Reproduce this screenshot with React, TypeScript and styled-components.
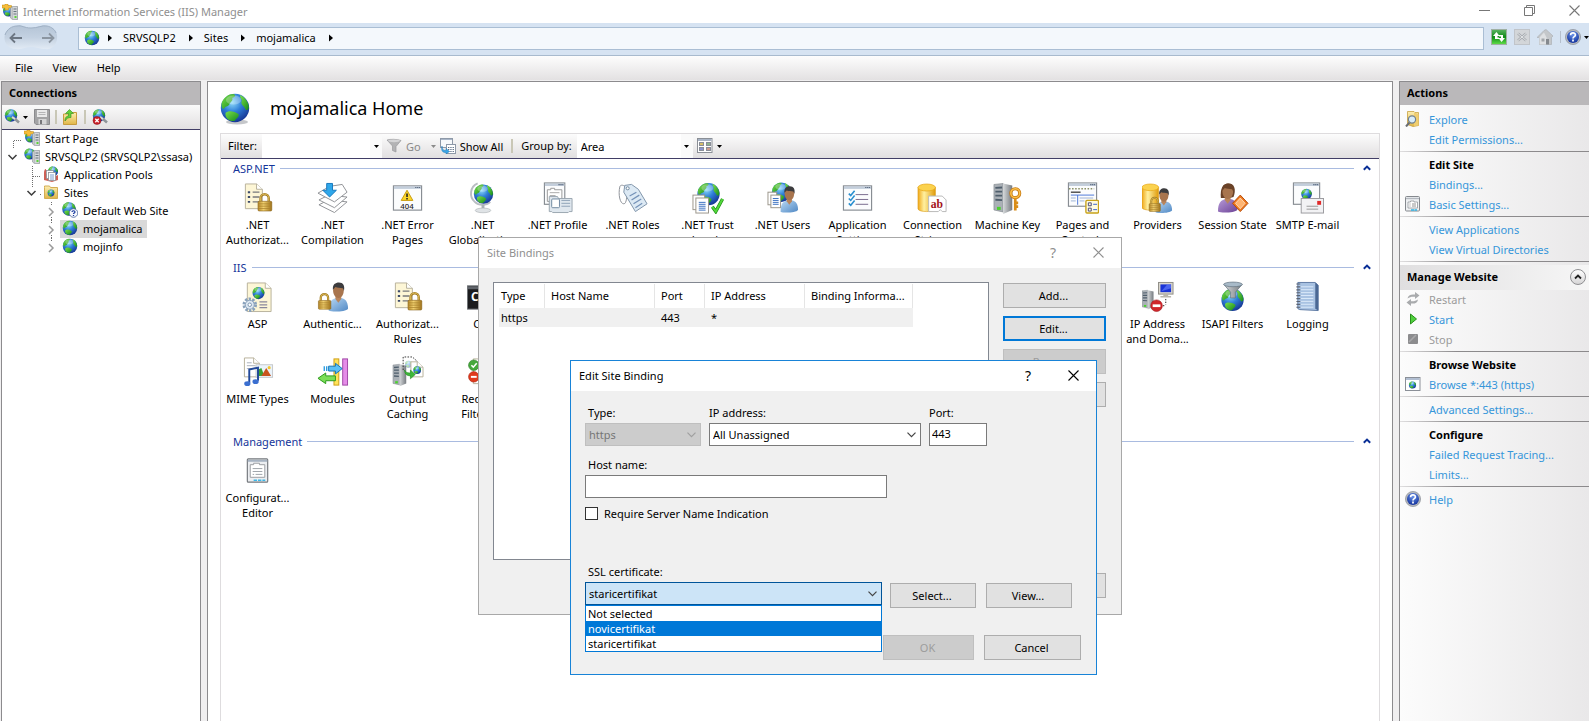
import React from "react";
import styled, { createGlobalStyle, css } from "styled-components";

const GlobalStyle = createGlobalStyle`
  * { box-sizing: border-box; }
  html, body { margin: 0; padding: 0; }
  body {
    font-family: "Noto Sans", "Open Sans", sans-serif;
    font-size: 11px;
    line-height: 15px;
    color: #000;
    background: #f0eff0;
    overflow: hidden;
  }
  button, input, select { font: inherit; color: inherit; margin: 0; }
  ul { list-style: none; margin: 0; padding: 0; }
  h1, h2, h3 { margin: 0; font-size: 11px; }
  svg { display: block; flex: none; }
`;

/* ---------- icon parts ---------- */

const DefsSvg = styled.svg`
  position: absolute;
  width: 0;
  height: 0;
`;

const SharedDefs = () => (
  <DefsSvg aria-hidden="true">
    <defs>
      <radialGradient id="sea" cx="0.4" cy="0.3" r="0.75">
        <stop offset="0" stopColor="#8fdcf9" />
        <stop offset="0.45" stopColor="#2f7fd8" />
        <stop offset="1" stopColor="#14308e" />
      </radialGradient>
      <linearGradient id="land" x1="0" y1="0" x2="1" y2="1">
        <stop offset="0" stopColor="#7be04a" />
        <stop offset="1" stopColor="#158a1c" />
      </linearGradient>
      <linearGradient id="brass" x1="0" x2="1">
        <stop offset="0" stopColor="#b88a2a" />
        <stop offset="0.4" stopColor="#f0d070" />
        <stop offset="1" stopColor="#a0721a" />
      </linearGradient>
      <linearGradient id="yellowCan" x1="0" x2="1">
        <stop offset="0" stopColor="#f0a818" />
        <stop offset="0.35" stopColor="#fff0a0" />
        <stop offset="1" stopColor="#e09a08" />
      </linearGradient>
      <linearGradient id="steel" x1="0" x2="1">
        <stop offset="0" stopColor="#d5d8da" />
        <stop offset="1" stopColor="#767b80" />
      </linearGradient>
      <linearGradient id="shirt" x1="0" y1="0" x2="1" y2="1">
        <stop offset="0" stopColor="#b9d9f4" />
        <stop offset="1" stopColor="#5088c4" />
      </linearGradient>
      <linearGradient id="violet" x1="0" y1="0" x2="1" y2="1">
        <stop offset="0" stopColor="#b79bd8" />
        <stop offset="1" stopColor="#6c4296" />
      </linearGradient>
      <linearGradient id="folder" x1="0" y1="0" x2="0" y2="1">
        <stop offset="0" stopColor="#fdeeb0" />
        <stop offset="1" stopColor="#e0b648" />
      </linearGradient>
      <linearGradient id="greenBox" x1="0" y1="0" x2="0" y2="1">
        <stop offset="0" stopColor="#5db465" />
        <stop offset="0.5" stopColor="#0e8a16" />
        <stop offset="1" stopColor="#62e04a" />
      </linearGradient>
      <radialGradient id="helpBlue" cx="0.5" cy="0.3" r="0.7">
        <stop offset="0" stopColor="#6d95ea" />
        <stop offset="1" stopColor="#10309c" />
      </radialGradient>
      <linearGradient id="pill" x1="0" y1="0" x2="0" y2="1">
        <stop offset="0" stopColor="#b4c4d6" />
        <stop offset="0.5" stopColor="#c3d1e1" />
        <stop offset="1" stopColor="#e2ebf5" />
      </linearGradient>
    </defs>
  </DefsSvg>
);

type At = { x: number; y: number; s?: number };
const at = ({ x, y, s = 1 }: At) => `translate(${x} ${y}) scale(${s})`;

const Globe = (p: At) => (
  <g transform={at(p)}>
    <circle r="10" fill="url(#sea)" />
    <path d="M-9.4-3.4C-8-7.6-4-10-1-9.8C1-9 0-7.6-2-7C-1-5-3.4-4.4-4-2.4C-5-.6-7-1.4-7.6 .6C-9 .8-9.8-1-9.4-3.4Z" fill="url(#land)" />
    <path d="M3.6-9.2C7-7.8 9.6-4 9.8-.6C9.4 1.8 7.6 2.2 6.8-.2C6-1.6 4-2.6 4.6-4.6C5.4-6 3.4-6.6 3.6-9.2Z" fill="url(#land)" />
    <path d="M-6.6 3.4C-5 1.6-.6 1.8 2.6 4.4C3 6.4 .8 7.4-.4 9.2C-4 9.6-7.4 7-6.6 3.4Z" fill="url(#land)" />
    <ellipse cx="-1" cy="-5.6" rx="5.4" ry="3.2" fill="#fff" opacity="0.28" />
  </g>
);

const Padlock = (p: At) => (
  <g transform={at(p)}>
    <path d="M3 8V5A4 4 0 0 1 11 5V8" fill="none" stroke="#a37c22" strokeWidth="2.4" />
    <path d="M3 8V5A4 4 0 0 1 11 5V8" fill="none" stroke="#e6c764" strokeWidth="0.8" />
    <rect x="0.5" y="8" width="13.5" height="9.5" rx="1" fill="url(#brass)" stroke="#8a651a" strokeWidth="0.6" />
    <path d="M1 10.5H14M1 12.8H14M1 15.1H14" stroke="#a8802c" strokeWidth="0.7" />
  </g>
);

const Sheet = ({ fill = "#fdf6d6", w = 18, h = 26, ...p }: At & { fill?: string; w?: number; h?: number }) => (
  <g transform={at(p)}>
    <path d={`M.5 .5H${w - 6}L${w} 6V${h}H.5Z`} fill={fill} stroke="#b8b29c" />
    <path d={`M${w - 6} .5V6H${w}`} fill="#fff" stroke="#b8b29c" />
  </g>
);

const Bullets = (p: At) => (
  <g transform={at(p)}>
    <path d="M0 1H2.4M0 6H2.4M0 11H2.4" stroke="#3b4a6b" strokeWidth="2" />
    <path d="M5 1H12M5 6H12M5 11H12" stroke="#77787c" strokeWidth="1.4" />
  </g>
);

const Person = ({ hair = "#3c3c3e", shirt = "url(#shirt)", long = false, ...p }: At & { hair?: string; shirt?: string; long?: boolean }) => (
  <g transform={at(p)}>
    <path d="M0 29C0 20 3 17 8 16H13C18 17 20 21 20 27C18 30 4 31 0 29Z" fill={shirt} />
    <path d="M7 14H13V17L10 21L7 17Z" fill="#b9855c" />
    {long && <path d="M3 15C2 5 5 0 11 0C17 0 19 6 16 14L12 15H6Z" fill={hair} />}
    <path d="M4.6 8C4.6 2.6 7 2 10 2S15.6 3 15.6 8S13 16 10.2 16S4.6 13 4.6 8Z" fill="#a8754e" />
    <path d="M4.4 7.4C4 2 7 0 10.6 0C15 0 17 3.6 15.8 8.6L14.6 6C12 5.4 9 6 7 4.8Z" fill={hair} />
  </g>
);

const Tower = (p: At) => (
  <g transform={at(p)}>
    <path d="M0 1L9 0V28L0 26Z" fill="#aab0b6" stroke="#7f858b" strokeWidth="0.6" />
    <path d="M9 0L18 2V26L9 30Z" fill="url(#steel)" />
    <path d="M1.4 4.4L8 4M1.4 8L8 8M1.4 12L8 12M1.4 16L8 16.4" stroke="#4f5e6c" strokeWidth="1.8" />
    <rect x="3" y="23" width="3.6" height="3" fill="#4bd22c" />
  </g>
);

const WindowBox = ({ w, h, ...p }: At & { w: number; h: number }) => (
  <g transform={at(p)}>
    <rect x="0.5" y="0.5" width={w} height={h} fill="#fbfcfd" stroke="#888d93" strokeWidth="1.2" />
    <rect x="1" y="1" width={w - 1} height="2.6" fill="#c3cedb" />
    <path d={`M${w - 6} 2.2H${w - 1}`} stroke="#4c5c74" strokeWidth="1.2" strokeDasharray="1.2 .8" />
  </g>
);

const Can = (p: At) => (
  <g transform={at(p)}>
    <path d="M0 4V26C0 30 18 30 18 26V4Z" fill="url(#yellowCan)" stroke="#d89a1c" strokeWidth="0.6" />
    <ellipse cx="9" cy="4.2" rx="9" ry="3.6" fill="#fbd24e" stroke="#e8a91c" strokeWidth="0.8" />
  </g>
);

const NoEntry = (p: At) => (
  <g transform={at(p)}>
    <circle r="6" fill="#d0262b" stroke="#9d1418" strokeWidth="0.6" />
    <rect x="-4" y="-1.4" width="8" height="2.8" fill="#fff" />
  </g>
);

const art: Record<string, React.ReactNode> = {
  authorization: (
    <>
      <Sheet x={3} y={1} />
      <Bullets x={6} y={9} />
      <Padlock x={16} y={11} s={1.05} />
    </>
  ),
  compilation: (
    <>
      <path d="M2 23L12 18L31 20L18 31Z" fill="#fff" stroke="#8f9296" />
      <path d="M2 18L12 13L31 15L18 26Z" fill="#fff" stroke="#8f9296" />
      <path d="M1 11L13 4L26 2L31 10L18 20Z" fill="#fff" stroke="#8f9296" />
      <path d="M10 1H16V8H20L13 15L6 8H10Z" fill="#2ea7ea" stroke="#1678bd" />
    </>
  ),
  errors: (
    <>
      <WindowBox x={1} y={3} w={29} h={25} />
      <path d="M15.5 8L21.5 18.5H9.5Z" fill="#fbd62a" stroke="#c89a0a" strokeLinejoin="round" />
      <path d="M15.5 11.4V15M15.5 16V17.6" stroke="#222" strokeWidth="1.6" />
      <text x="15.5" y="27" fontSize="8" fontWeight="500" textAnchor="middle" fill="#222">404</text>
    </>
  ),
  globalization: (
    <>
      <path d="M11 1C3 4 2 15 8 20C12 24 20 24 24 20" fill="none" stroke="#b9bdc2" strokeWidth="2" />
      <Globe x={17} y={12} />
      <path d="M15 23H18V28H15Z" fill="#aab0b6" />
      <ellipse cx="16.5" cy="28.8" rx="8" ry="2.4" fill="#dfe3e6" stroke="#a7abb0" strokeWidth="0.6" />
    </>
  ),
  profile: (
    <>
      <WindowBox x={2} y={0} w={21} h={22} />
      <path d="M5.5 7.5H9V6H13V7.5H20.5V19.5H5.5Z" fill="#fff" stroke="#999" />
      <path d="M8 10.5H18M8 13.5H14" stroke="#aaa" />
      <path d="M7.5 14.5H16L17 16.5H31V30H28L27 31H11L10 30H7.5Z" fill="#dfe7ee" stroke="#9aa5af" />
      <rect x="10" y="17" width="8" height="9" rx="1" fill="#fff" stroke="#6f88a0" />
      <path d="M20 18.5H29M20 21.5H29M20 24.5H29" stroke="#8fa3b8" />
    </>
  ),
  roles: (
    <>
      <path d="M3 4C1 12 3 22 7 22C10 22 10 14 11 8C8 2 4 2 3 4Z" fill="#fff" stroke="#8d9299" />
      <path d="M8 3L15 2L22 7L31 22L19 30L7 10Z" fill="#dce9f4" stroke="#7e93a8" />
      <circle cx="11" cy="6" r="1.6" fill="#fff" stroke="#70869c" />
      <path d="M13 14L20 10M15 18L23 13M17 22L25 17M19 26L26 21.5" stroke="#7592b8" strokeWidth="1.3" />
    </>
  ),
  trust: (
    <>
      <Globe x={17} y={12} s={1.15} />
      <rect x="1" y="13" width="12" height="15" fill="#fff" stroke="#9a958a" />
      <rect x="4" y="16" width="13" height="15.5" fill="#fff" stroke="#9a958a" />
      <path d="M7 20.5H14M7 22.5H14M7 24.5H14M7 26.5H14M7 28.5H14" stroke="#3a70c0" />
      <path d="M21 25L24.5 30L31.5 17" fill="none" stroke="#1e8a14" strokeWidth="3.4" />
      <path d="M21 25L24.5 30L31.5 17" fill="none" stroke="#52d83a" strokeWidth="2" />
    </>
  ),
  users: (
    <>
      <Globe x={15} y={10} s={1} />
      <rect x="1" y="10" width="9" height="13" fill="#fff" stroke="#9a958a" />
      <rect x="4" y="13" width="10" height="13" fill="#fff" stroke="#9a958a" />
      <path d="M6 16.5H12M6 18.5H12M6 20.5H12M6 22.5H12" stroke="#3a70c0" />
      <Person x={14} y={4} s={0.9} />
    </>
  ),
  appSettings: (
    <>
      <WindowBox x={1} y={3} w={29} h={25} />
      <path d="M14 12.5H27M14 17.5H27M14 22.5H27" stroke="#77698c" />
      <path d="M7 11.5L9 13.5L13 8.5M7 16.5L9 18.5L13 13.5M7 21.5L9 23.5L13 18.5" fill="none" stroke="#2a8fd0" strokeWidth="1.6" />
    </>
  ),
  connection: (
    <>
      <Can x={1} y={1} />
      <path d="M12 14H26L30 18V30H26L24 28L22 30H12Z" fill="#fff" stroke="#b9b9b9" />
      <text x="20.5" y="26" fontSize="12" fontWeight="700" fontFamily="Liberation Serif, serif" textAnchor="middle" fill="#a3131a">ab</text>
    </>
  ),
  machineKey: (
    <>
      <Tower x={2} y={1} s={1.05} />
      <circle cx="24" cy="11" r="4.6" fill="none" stroke="#c87a12" strokeWidth="3.2" />
      <circle cx="24" cy="11" r="4.6" fill="none" stroke="#fbc14a" strokeWidth="1.6" />
      <path d="M24 16V29M24 21H27M24 25H27" stroke="#d98d18" strokeWidth="2.8" />
    </>
  ),
  pages: (
    <>
      <WindowBox x={1} y={0} w={29} h={24} />
      <path d="M2 6.5H28" stroke="#8a9066" strokeWidth="1.6" strokeDasharray="1.6 1.6" />
      <path d="M4 10H14" stroke="#333" strokeWidth="1.3" />
      <path d="M4 13H28M11 13V23" stroke="#4a76d8" />
      <path d="M4 16H9M4 19H9M13 16H27M13 19H18" stroke="#9db2d4" />
      <rect x="19.5" y="18.5" width="13" height="13" rx="1" fill="#fffbe0" stroke="#c8a21a" strokeWidth="1.4" />
      <path d="M22 21H25V24H22ZM22 26.5H25V29.5H22Z" fill="none" stroke="#4a4a78" />
      <path d="M27 22.5H31M27 28H31" stroke="#3a62d0" />
    </>
  ),
  providers: (
    <>
      <Can x={0} y={1} s={0.95} />
      <Person x={14} y={6} s={0.85} />
      <Padlock x={7} y={15} s={0.85} />
    </>
  ),
  session: (
    <>
      <Person x={1} y={1} hair="#6a4228" shirt="url(#violet)" long />
      <path d="M24 13L32 21.5L24 30L16 21.5Z" fill="#ef7a1e" stroke="#b44a0a" />
      <path d="M24 16L29 21.5L24 27L19 21.5Z" fill="#ffb470" stroke="#fff" strokeWidth="0.6" />
    </>
  ),
  smtp: (
    <>
      <WindowBox x={1} y={0} w={27} h={22} />
      <Globe x={15} y={12} s={0.55} />
      <rect x="9.5" y="16.5" width="23" height="15" fill="#f2f2f4" stroke="#9b9b9f" />
      <rect x="26" y="19" width="4" height="4" fill="#e02a2a" />
      <path d="M15 24.5H27M15 27.5H27" stroke="#999" />
    </>
  ),
  asp: (
    <>
      <Sheet x={5} y={1} w={25} h={30} />
      <Globe x={17} y={12} s={0.62} />
      <path d="M18 21H26M18 24H26M18 27H26" stroke="#8a879c" strokeWidth="1.3" />
      <circle cx="8" cy="24" r="6" fill="none" stroke="#8aa2bc" strokeWidth="3" strokeDasharray="2.4 1.37" />
      <circle cx="8" cy="24" r="4.6" fill="#dce7f1" stroke="#8aa2bc" />
      <circle cx="8" cy="24" r="1.8" fill="#fff" stroke="#7c95b0" />
    </>
  ),
  authentication: (
    <>
      <Person x={12} y={1} s={1} />
      <Padlock x={1} y={12} s={0.95} />
    </>
  ),
  cgi: (
    <>
      <rect x="0.5" y="4.5" width="31" height="24" fill="#1c1c1e" stroke="#707478" />
      <rect x="1" y="5" width="30" height="3" fill="#60646a" />
      <text x="4" y="20" fontSize="12" fontWeight="700" fill="#fff">C:\</text>
    </>
  ),
  ip: (
    <>
      <Tower x={0} y={9} s={0.66} />
      <rect x="17" y="1" width="15" height="12" fill="#d9d6cc" stroke="#8f8d86" />
      <rect x="19" y="3" width="11" height="8" fill="#1a33d6" />
      <path d="M20 10L26 3H30V7Z" fill="#6a86ff" opacity="0.6" />
      <path d="M22 13H27V15H30V16.500H19V15H22Z" fill="#b9b6ac" />
      <path d="M24.500 18V24M23 25H17" stroke="#222" strokeDasharray="1.4 1.4" />
      <NoEntry x={15} y={25} />
    </>
  ),
  isapi: (
    <>
      <Globe x={16} y={19} s={1.15} />
      <path d="M7 3L14 11V17H19V11L26 3Z" fill="url(#steel)" stroke="#60707e" strokeWidth="0.7" />
      <ellipse cx="16.5" cy="3" rx="9.6" ry="2.4" fill="#a8bac8" stroke="#60707e" strokeWidth="0.7" />
    </>
  ),
  logging: (
    <>
      <path d="M6 1H24L27 4V30L8 29L6 28Z" fill="#a8c2e2" stroke="#5f7ba4" />
      <path d="M24 1L27 4V30L24 28Z" fill="#4b6894" />
      <path d="M9 5.5H22M9 8.5H22M9 11.5H22M9 14.5H22M9 17.5H22M9 20.5H22M9 23.5H22M9 26.5H22" stroke="#dceafa" />
      <path d="M6.5 2V29" stroke="#5c6472" strokeWidth="4" strokeDasharray="1.2 1.8" />
    </>
  ),
  mime: (
    <>
      <Sheet x={2} y={1} w={16} h={20} fill="#fff" />
      <path d="M5 6.5H10M5 9.5H14M5 12.5H14" stroke="#a9b0ba" />
      <rect x="14.5" y="8.5" width="17" height="13" fill="#eaf3fb" stroke="#c5c8cb" />
      <path d="M16 20V14L20 12L23 20Z" fill="#3ba035" />
      <path d="M20 20L25 12L30 20Z" fill="#c8541e" />
      <circle cx="28" cy="11.5" r="1.6" fill="#f4c430" />
      <path d="M7.5 27V13.5L16.5 11.5V25" fill="none" stroke="#234a9a" strokeWidth="2" />
      <ellipse cx="5.5" cy="28" rx="3.2" ry="2.5" fill="#3b6fd0" />
      <ellipse cx="14" cy="26" rx="3.2" ry="2.5" fill="#3b6fd0" />
    </>
  ),
  modules: (
    <>
      <rect x="17.5" y="2.5" width="5" height="27" fill="#ffe35a" stroke="#cf9e16" />
      <rect x="26.5" y="2.5" width="5" height="27" fill="#e58ce8" stroke="#a048a6" />
      <path d="M7.5 10V15M10 10V15" stroke="#2a9be0" strokeWidth="1.4" />
      <path d="M12 10H19V7L26 12.5L19 18V15H12Z" fill="#5cc0f5" stroke="#1474b8" />
      <path d="M19 20H9V17L1 22.5L9 28V25H19Z" fill="#7ade56" stroke="#2c9a1c" />
    </>
  ),
  output: (
    <>
      <Tower x={1} y={8} s={0.76} />
      <path d="M11.5 14V.5H21L26 5V11" fill="none" stroke="#333" strokeDasharray="1.6 1.4" />
      <g opacity="0.4"><Globe x={17} y={8} s={0.35} /></g>
      <Sheet x={19} y={5} w={13} h={16} fill="#fff" />
      <Globe x={26} y={14} s={0.4} />
      <path d="M13 14C14 17 17 17 19 17V14L24 18.5L19 23V20C15 20 13 18 13 14Z" fill="#3fb83a" stroke="#1f8a1c" strokeWidth="0.6" />
    </>
  ),
  filtering: (
    <>
      <Sheet x={6} y={2} w={20} h={26} fill="#fff" />
      <circle cx="7" cy="9" r="5.4" fill="#46a83c" stroke="#2a7a24" strokeWidth="0.6" />
      <path d="M4.5 9L6.5 11L10 7" fill="none" stroke="#fff" strokeWidth="1.6" />
      <circle cx="7" cy="21" r="5.4" fill="#e03a1c" stroke="#a8200e" strokeWidth="0.6" />
      <path d="M4 21H10" stroke="#fff" strokeWidth="2" />
    </>
  ),
  config: (
    <>
      <rect x="5.5" y="3.5" width="21" height="24" rx="1" fill="#eceef1" stroke="#74787d" strokeWidth="1.2" />
      <path d="M6 5.5H26" stroke="#a7b3c2" strokeWidth="2" />
      <path d="M8.5 9.500H12V8H18V9.500H23.500V22.500H8.500Z" fill="#fff" stroke="#9a9da1" />
      <path d="M11 13.500H21M11 16.500H21M11 19.500H12.500M14 19.500H21" stroke="#9da2a8" />
      <path d="M12 25.500H24" stroke="#3bb7e8" strokeWidth="1.4" strokeDasharray="3.5 1" />
    </>
  ),
};

const FeatureArt = ({ name }: { name: string }) => (
  <svg width="32" height="32" viewBox="0 0 33 32" aria-hidden="true">{art[name]}</svg>
);

/* ---------- small icons ---------- */

const Icon16 = ({ children }: { children: React.ReactNode }) => (
  <svg width="16" height="16" viewBox="0 0 16 16" aria-hidden="true">{children}</svg>
);

const GlobeIcon = ({ size = 16 }: { size?: number }) => (
  <svg width={size} height={size} viewBox="-11 -11 22 22" aria-hidden="true"><Globe x={0} y={0} /></svg>
);

const MiniTower = () => (
  <g>
    <path d="M8.500 4L10.500 2.500H15.500V15.500H10.500L8.500 14Z" fill="url(#steel)" stroke="#8b9096" strokeWidth="0.600" />
    <path d="M11 2.800H15.200V15.200H11Z" fill="#d3d6d9" />
    <path d="M11.500 5H14.500M11.500 7.500H14.500M11.500 10H14.500" stroke="#6b7680" strokeWidth="1.100" />
    <rect x="12.500" y="12" width="2" height="2" fill="#5bd436" />
  </g>
);

const AppIcon = () => (
  <Icon16>
    <Globe x={6.5} y={7} s={0.55} />
    <path d="M0 1H3V0H6V1.500H9.500V4H6.500V6H3V4H0Z" fill="#f6bd3a" stroke="#c08818" strokeWidth="0.500" />
    <MiniTower />
  </Icon16>
);

const ServerIcon = () => (
  <Icon16>
    <Globe x={5.8} y={6} s={0.55} />
    <MiniTower />
  </Icon16>
);

const PoolsIcon = () => (
  <Icon16>
    <Globe x={10} y={5.5} s={0.5} />
    <path d="M1 8C1 4 2 3 3 3V8L13 10L15 9V14L9 16L1 14Z" fill="#c33a2c" opacity="0.8" />
    <rect x="3.5" y="4.5" width="7" height="8" fill="#fff" stroke="#8d9298" strokeWidth="0.8" />
    <rect x="5.5" y="6.5" width="7" height="8" fill="#fff" stroke="#8d9298" strokeWidth="0.8" />
    <path d="M7 9H11M7 11H11M7 13H11" stroke="#5b87c4" strokeWidth="0.8" />
  </Icon16>
);

const SitesIcon = () => (
  <Icon16>
    <path d="M1.5 3.5V2H6.5L7.5 3.5H14.5V14.5H1.5Z" fill="url(#folder)" stroke="#d2ad54" />
    <Globe x={8} y={9} s={0.34} />
  </Icon16>
);

const SiteUnknownIcon = () => (
  <Icon16>
    <Globe x={7} y={7} s={0.68} />
    <circle cx="11.5" cy="11" r="4.3" fill="#f4f6fb" stroke="#4a66a0" strokeWidth="0.8" />
    <path d="M10 10C10 8.300 13 8.300 13 10C13 11 11.500 11 11.500 12M11.500 13V14" fill="none" stroke="#15389e" strokeWidth="1.200" />
  </Icon16>
);

const ConnectIcon = ({ blocked = false }: { blocked?: boolean }) => (
  <Icon16>
    <Globe x={7} y={6.5} s={0.62} />
    <path d="M8 8L11 10L15 13.5" stroke="#8e9499" strokeWidth="2.6" />
    <path d="M8 8L11 10" stroke="#d8dcdf" strokeWidth="1.6" />
    {blocked && (
      <g>
        <circle cx="5" cy="11.5" r="4" fill="#c8202a" stroke="#8f1018" strokeWidth="0.5" />
        <path d="M3.300 9.800L6.700 13.200M6.700 9.800L3.300 13.200" stroke="#fff" strokeWidth="1.300" />
      </g>
    )}
  </Icon16>
);

const SaveIcon = () => (
  <Icon16>
    <path d="M.5 .5H15.5V15.5H2L.5 14Z" fill="#a3a3a5" stroke="#8b8b8e" />
    <rect x="3" y="1" width="10" height="7" fill="#e9e9ea" />
    <path d="M4.5 3.5H11.5M4.5 5.5H11.5" stroke="#b5b5b7" />
    <rect x="4.5" y="10" width="8" height="5.5" fill="#d5d5d6" />
    <rect x="6" y="11" width="2" height="4" fill="#77777a" />
  </Icon16>
);

const UpFolderIcon = () => (
  <Icon16>
    <path d="M1.5 5V15.5H14.5V3.5H9V5Z" fill="url(#folder)" stroke="#c79c3e" />
    <path d="M3 12C3 8 5 7 6.500 7V4.500H3.500L7.500 .500L11.500 4.500H9V8.500C6 8.500 4.500 9.500 3 12Z" fill="#63cf3c" stroke="#2f8f1c" strokeWidth="0.600" />
  </Icon16>
);

const RefreshIcon = () => (
  <Icon16>
    <rect x="0.5" y="0.5" width="15" height="15" fill="url(#greenBox)" stroke="#9fb0a2" />
    <path d="M5.500 3L2 7H4V10H8V8.500H6.500V7H8.500Z" fill="#fff" />
    <path d="M10.500 13L14 9H12V6H8V7.500H10V9H7.500Z" fill="#fff" />
  </Icon16>
);

const StopLoadIcon = () => (
  <Icon16>
    <rect x="0.5" y="0.5" width="15" height="15" fill="#d3d6d9" stroke="#c0c4c9" />
    <path d="M4 4.5L12 11.5M12 4.5L4 11.5" stroke="#a7abb0" strokeWidth="2.4" />
    <path d="M4 4.5L12 11.5M12 4.5L4 11.5" stroke="#f0f2f4" strokeWidth="0.8" />
  </Icon16>
);

const HomeIcon = () => (
  <Icon16>
    <path d="M0 8.5L7 1.5L9 .5L16 7L14.5 8.5V15.5H2.5V8.5Z" fill="#c4c7ca" stroke="#aeb2b6" strokeWidth="0.7" />
    <path d="M2.500 8.500L7 3.500L9.500 8.500V15.500H2.500Z" fill="#dfe1e3" />
    <rect x="9" y="10" width="3" height="5.5" fill="#85898e" />
    <rect x="4.5" y="9.5" width="3" height="3" fill="#a2a6aa" />
  </Icon16>
);

const HelpIcon = () => (
  <Icon16>
    <circle cx="8" cy="8" r="7.6" fill="#b5b8be" stroke="#82868f" strokeWidth="0.6" />
    <circle cx="8" cy="8" r="6" fill="url(#helpBlue)" />
    <path d="M5.6 6.2C5.6 3.2 10.4 3.2 10.4 6C10.4 7.6 8 7.6 8 9.4M8 10.6V12.4" fill="none" stroke="#fff" strokeWidth="1.7" />
  </Icon16>
);

const ExploreIcon = () => (
  <Icon16>
    <path d="M2.5 .5H9L10 1.5H13.5V14.5L8 15.5L2.5 13.5Z" fill="url(#folder)" stroke="#c8a244" strokeWidth="0.8" />
    <path d="M9 1.5L13.5 3V14.5L9 15Z" fill="#f0ce70" />
    <path d="M4.5 11.5L1 15.5" stroke="#6a6e74" strokeWidth="2" />
    <circle cx="7" cy="8.5" r="3.6" fill="#d7ecfa" stroke="#71808e" strokeWidth="1.2" />
  </Icon16>
);

const SettingsIcon = () => (
  <Icon16>
    <rect x="0.5" y="0.5" width="14" height="14.5" rx="1" fill="#eef0f2" stroke="#85898e" />
    <path d="M1 2.5H14" stroke="#b4b9c0" strokeWidth="1.4" />
    <path d="M3 6H5.5V5H9V6H12.5V12H3Z" fill="#fff" stroke="#93979c" strokeWidth="0.8" />
    <path d="M4.5 8H5.5M7 8H11M4.5 10H5.5M7 10H11" stroke="#888" strokeWidth="0.9" />
    <path d="M6 14H12" stroke="#2fb4e6" strokeWidth="1.3" strokeDasharray="3 .5" />
  </Icon16>
);

const RestartIcon = () => (
  <Icon16>
    <path d="M2.5 7.5C3 4 6 3 10 3.5V1L14.5 4.5L10 8V5.8C6.5 5.5 5 6 2.5 7.5Z" fill="#a9abad" />
    <path d="M13 8.5C12.5 12 9.5 13 6 12.5V15L1.5 11.5L6 8V10.2C9 10.5 10.5 10 13 8.5Z" fill="#a9abad" />
  </Icon16>
);

const StartIcon = () => (
  <Icon16>
    <path d="M5.500 3L11.500 8L5.500 13Z" fill="#4fd03c" stroke="#2a8f1c" strokeLinejoin="round" />
  </Icon16>
);

const StopIcon = () => (
  <Icon16>
    <rect x="3" y="3" width="10" height="10" rx="1" fill="#8c8c8e" />
    <path d="M4 11L11 4" stroke="#a8a8aa" strokeWidth="1.6" />
  </Icon16>
);

const BrowseIcon = () => (
  <Icon16>
    <rect x="0.5" y="1.5" width="14.5" height="13" fill="#fff" stroke="#8b9098" />
    <rect x="1" y="2" width="13.5" height="2" fill="#b2bfd2" />
    <Globe x={7.5} y={9} s={0.36} />
  </Icon16>
);

const FunnelIcon = () => (
  <Icon16>
    <path d="M1 2C4 1 11 1 15 2.5L10 8.5V14L6.5 12.5V8Z" fill="#b3b3b5" stroke="#9a9a9c" strokeWidth="0.7" />
    <ellipse cx="8" cy="2.8" rx="6" ry="1.4" fill="#d5d5d7" />
  </Icon16>
);

const ShowAllIcon = () => (
  <Icon16>
    <rect x="0.5" y="0.5" width="12" height="9" fill="#f7f9fb" stroke="#8e99a8" />
    <path d="M1 1.5H12" stroke="#a9b6c8" />
    <rect x="6.5" y="6.5" width="9" height="9" fill="#fff" stroke="#8e99a8" />
    <path d="M8 9.5H14.5M8 11.5H14.5M8 13.5H14.5" stroke="#5a6c84" strokeDasharray="1.3 1" />
    <path d="M2 8C2 12 4 12.5 6 12.5V10.5L9.5 13.5L6 16V14.5C2.5 14.5 1 13 2 8Z" fill="#3ca6e6" stroke="#1b74b4" strokeWidth="0.5" />
  </Icon16>
);

const GridViewIcon = () => (
  <Icon16>
    <rect x="0.5" y="0.5" width="14.5" height="14" fill="#fff" stroke="#8b8f96" />
    <path d="M1 2H14.5" stroke="#a8b4c6" strokeWidth="2" />
    <rect x="2.5" y="4.5" width="4" height="3" fill="#d8c06a" stroke="#8a8e98" />
    <rect x="9.5" y="4.500" width="4" height="3" fill="#8eb48c" stroke="#8a8e98" />
    <rect x="2.5" y="9.500" width="4" height="3" fill="#8a94d0" stroke="#8a8e98" />
    <rect x="9.5" y="9.500" width="4" height="3" fill="#d09a8a" stroke="#8a8e98" />
  </Icon16>
);

const DownArrow = ({ color = "#000" }: { color?: string }) => (
  <svg width="5" height="3" viewBox="0 0 5 3" aria-hidden="true"><path d="M0 0H5L2.5 3Z" fill={color} /></svg>
);

const CrumbArrow = () => (
  <svg width="4" height="8" viewBox="0 0 4 8" aria-hidden="true"><path d="M0 .5L4 4L0 7.5Z" fill="#000" /></svg>
);

const Cross = () => (
  <svg width="11" height="11" viewBox="0 0 11 11" aria-hidden="true">
    <path d="M.5 .5L10.5 10.5M10.5 .5L.5 10.5" stroke="currentColor" strokeWidth="1.1" />
  </svg>
);

const Caret = () => (
  <svg width="9" height="6" viewBox="0 0 9 6" aria-hidden="true">
    <path d="M.5 .7L4.5 4.7L8.5 .7" fill="none" stroke="currentColor" strokeWidth="1.2" />
  </svg>
);

/* ---------- window frame ---------- */

const Window = styled.div`
  display: flex;
  flex-direction: column;
  height: 100vh;
  min-height: 520px;
`;

const TitleBar = styled.header`
  display: flex;
  align-items: center;
  height: 23px;
  padding: 0 9px 0 2px;
  gap: 5px;
  background: #fff;
  color: #8f8f8f;
`;

const WindowTitle = styled.h1`
  flex: 1;
  font-weight: 400;
`;

const CaptionButtons = styled.div`
  display: flex;
  align-self: flex-start;
  align-items: center;
  gap: 34px;
  height: 21px;
`;

const CaptionButton = styled.button`
  display: flex;
  padding: 0;
  border: 0;
  background: none;
  color: #777;
`;

const NavBar = styled.nav`
  display: flex;
  align-items: center;
  height: 33px;
  padding: 0 0 2px 4px;
  background: #d6e3f2;
  border-bottom: 1px solid #a8bace;
`;

const NavPill = styled.div`
  width: 74px;
`;

const AddressBar = styled.div`
  display: flex;
  flex: 1;
  align-items: center;
  height: 23px;
  padding: 0 0 1px 5px;
  border: 1px solid #aabed4;
  background: #f4f8fc;
`;

const Crumb = styled.button`
  padding: 0 13px 0 11px;
  border: 0;
  background: none;
`;

const CrumbStart = styled.span`
  padding-right: 8px;
`;

const NavTools = styled.div`
  display: flex;
  align-items: center;
  gap: 7px;
  width: 105px;
  padding: 0 0 2px 7px;
  overflow: hidden;
`;

const ToolButton = styled.button`
  display: flex;
  align-items: center;
  gap: 3px;
  padding: 0;
  border: 0;
  background: none;
`;

const NavDivider = styled.span`
  width: 1px;
  height: 12px;
  margin-right: -3px;
  background: #b5bfcc;
`;

const MenuBar = styled.div`
  display: flex;
  align-items: center;
  gap: 20px;
  height: 24px;
  padding: 0 15px 2px;
  background: linear-gradient(#fdfdfd, #e3e1e2);
`;

const MenuButton = styled.button`
  padding: 0;
  border: 0;
  background: none;
`;

const Columns = styled.div`
  display: flex;
  flex: 1;
  min-height: 0;
  padding: 1px 0 0 1px;
  gap: 6px;
`;

const panelBorder = css`
  border: 1px solid #8c8b8e;
  border-bottom: 0;
`;

const PanelHeading = styled.h2`
  height: 23px;
  padding: 3px 7px;
  background: #bab8ba;
  font-weight: 700;
`;

/* ---------- connections ---------- */

const Connections = styled.aside`
  ${panelBorder}
  flex: 0 0 200px;
  background: #fff;
`;

const ConnectionTools = styled.div`
  display: flex;
  align-items: center;
  height: 25px;
  padding-left: 2px;
  background: linear-gradient(#fafafa, #e2e0e1);
  border-bottom: 1px solid #413e66;
`;

const Separator = styled.span<{ $gap: number }>`
  width: 2px;
  height: 14px;
  margin: 0 ${(p) => p.$gap}px;
  background: #c9c7b6;
`;

const ToolSpacer = styled.span`
  width: 6px;
`;

const TreeRow = styled.li`
  display: flex;
  height: 18px;
`;

const TreeLabel = styled.button<{ $selected?: boolean }>`
  display: flex;
  align-items: center;
  gap: 5px;
  padding: 0 4px 2px 2px;
  border: 0;
  background: ${(p) => (p.$selected ? "#d9d9d9" : "none")};
  white-space: nowrap;
`;

type Guide = { line?: string; toggle?: string; toggleColor?: string };

const Gutter = ({ width, line, toggle, toggleColor }: Guide & { width: number }) => (
  <svg width={width} height="18" viewBox={`0 0 ${width} 18`} aria-hidden="true">
    {line && <path d={line} fill="none" stroke="#6e6e6e" strokeDasharray="1 1" />}
    {toggle && <path d={toggle} fill="none" stroke={toggleColor} strokeWidth="1.5" />}
  </svg>
);

const siteToggle = { line: "M49.5 0V4M49.5 15V18", toggle: "M47 6L51 10L47 14", toggleColor: "#9b9b9b" };

const tree = [
  { label: "Start Page", icon: <AppIcon />, width: 20, line: "M11.5 18V10.5H21" },
  { label: "SRVSQLP2 (SRVSQLP2\\ssasa)", icon: <ServerIcon />, width: 20, toggle: "M6.5 7L10.5 11L14.5 7", toggleColor: "#3c3c3c" },
  { label: "Application Pools", icon: <PoolsIcon />, width: 39, line: "M30.5 0V18M31 10.5H40" },
  { label: "Sites", icon: <SitesIcon />, width: 39, line: "M30.5 0V4M38 10.5H40", toggle: "M25.5 7L29.5 11L33.5 7", toggleColor: "#3c3c3c" },
  { label: "Default Web Site", icon: <SiteUnknownIcon />, width: 58, ...siteToggle },
  { label: "mojamalica", icon: <GlobeIcon />, width: 58, selected: true, ...siteToggle },
  { label: "mojinfo", icon: <GlobeIcon />, width: 58, toggle: siteToggle.toggle, toggleColor: "#9b9b9b", line: "M49.5 0V4" },
];

/* ---------- home ---------- */

const Home = styled.main`
  ${panelBorder}
  flex: 1;
  min-width: 0;
  display: flex;
  flex-direction: column;
  padding: 0 12px;
  background: #fff;
`;

const HomeHeader = styled.div`
  display: flex;
  align-items: center;
  gap: 19px;
  height: 51px;
  padding-top: 3px;
`;

const HomeTitle = styled.h2`
  padding-bottom: 3px;
  font-size: 18px;
  line-height: 24px;
  font-weight: 400;
`;

const HomeBody = styled.div`
  flex: 1;
  border: 1px solid #dedcde;
  border-bottom: 0;
`;

const FilterBar = styled.div`
  display: flex;
  align-items: center;
  height: 25px;
  padding-left: 7px;
  background: linear-gradient(#fcfcfc, #e1dfe0);
  border-bottom: 1px solid #413e66;
`;

const FilterLabel = styled.label`
  flex: none;
  padding: 0 5px 2px 0;
`;

const FilterInput = styled.input`
  width: 108px;
  height: 24px;
  padding: 0 4px;
  border: 0;
  background: #fff;
`;

const GroupSelect = styled.select`
  appearance: none;
  width: 104px;
  height: 24px;
  padding: 0 4px;
  border: 0;
  background: #fff;
`;

const DropButton = styled.button`
  display: flex;
  align-items: center;
  justify-content: center;
  width: 12px;
  height: 24px;
  padding: 0;
  border: 0;
  background: #fafafa;
`;

const BarButton = styled.button`
  display: flex;
  align-items: center;
  gap: 4px;
  margin-left: 4px;
  padding: 0;
  border: 0;
  background: none;
  &:disabled { color: #8a8a8a; }
`;

const DropSpace = styled.span`
  display: flex;
  width: 11px;
  justify-content: flex-end;
`;

const GroupHeader = styled.div`
  display: flex;
  align-items: center;
  height: 18px;
  padding: 0 8px 0 12px;
  gap: 5px;
`;

const GroupTitle = styled.h3`
  font-weight: 400;
  color: #14359a;
`;

const Rule = styled.span`
  flex: 1;
  height: 1px;
  background: #a9bbe0;
`;

const Collapse = styled.button`
  display: flex;
  padding: 0 0 0 4px;
  border: 0;
  background: none;
  color: #0a2f96;
`;

const Features = styled.ul`
  display: grid;
  grid-template-columns: repeat(auto-fill, 75px);
  grid-auto-rows: 75px;
  margin-bottom: 6px;
`;

const Feature = styled.li<{ $column?: number }>`
  display: flex;
  flex-direction: column;
  align-items: center;
  gap: 3px;
  padding: 5px 2px 0 0;
  text-align: center;
  ${(p) => p.$column && css`grid-column-start: ${p.$column};`}
`;

const FeatureName = styled.span`
  white-space: pre-line;
`;

type FeatureItem = { name: string; art: string; column?: number };
const groups: { title: string; items: FeatureItem[] }[] = [
  {
    title: "ASP.NET",
    items: [
      { name: ".NET\nAuthorizat...", art: "authorization" },
      { name: ".NET\nCompilation", art: "compilation" },
      { name: ".NET Error\nPages", art: "errors" },
      { name: ".NET\nGlobalization", art: "globalization" },
      { name: ".NET Profile", art: "profile" },
      { name: ".NET Roles", art: "roles" },
      { name: ".NET Trust\nLevels", art: "trust" },
      { name: ".NET Users", art: "users" },
      { name: "Application\nSettings", art: "appSettings" },
      { name: "Connection\nStrings", art: "connection" },
      { name: "Machine Key", art: "machineKey" },
      { name: "Pages and\nControls", art: "pages" },
      { name: "Providers", art: "providers" },
      { name: "Session State", art: "session" },
      { name: "SMTP E-mail", art: "smtp" },
    ],
  },
  {
    title: "IIS",
    items: [
      { name: "ASP", art: "asp" },
      { name: "Authentic...", art: "authentication" },
      { name: "Authorizat...\nRules", art: "authorization" },
      { name: "CGI", art: "cgi" },
      { name: "IP Address\nand Doma...", art: "ip", column: 13 },
      { name: "ISAPI Filters", art: "isapi" },
      { name: "Logging", art: "logging" },
      { name: "MIME Types", art: "mime", column: 1 },
      { name: "Modules", art: "modules" },
      { name: "Output\nCaching", art: "output" },
      { name: "Request\nFiltering", art: "filtering" },
    ],
  },
  { title: "Management", items: [{ name: "Configurat...\nEditor", art: "config" }] },
];

/* ---------- actions ---------- */

const Actions = styled.aside`
  ${panelBorder}
  border-right: 0;
  flex: 0 0 190px;
  background: linear-gradient(90deg, #fcfcfc, #e9e8e9);
`;

const ActionList = styled.div`
  padding-top: 5px;
`;

const ActionRow = styled.div`
  display: flex;
  align-items: center;
  height: 20px;
  padding-bottom: 2px;
`;

const ActionIcon = styled.span`
  width: 29px;
  padding-left: 5px;
`;

const ActionLink = styled.a`
  white-space: nowrap;
  color: #3696da;
  text-decoration: none;
`;

const ActionOff = styled.span`
  white-space: nowrap;
  color: #9b9b9b;
`;

const ActionHead = styled.h3`
  white-space: nowrap;
  font-weight: 700;
`;

const ActionRule = styled.div`
  height: 5px;
  padding-top: 1px;
  &::after {
    content: "";
    display: block;
    height: 1px;
    background: linear-gradient(90deg, #e0dfe0, #8c8a8c 30%);
  }
`;

const ActionBand = styled.div`
  display: flex;
  align-items: center;
  justify-content: space-between;
  height: 25px;
  padding: 0 3px 2px 7px;
  background: linear-gradient(90deg, #e0dfe0, #f6f6f6);
`;

const RoundButton = styled.button`
  display: flex;
  align-items: center;
  justify-content: center;
  width: 16px;
  height: 16px;
  padding: 0;
  border: 1px solid #8f8f92;
  border-radius: 8px;
  background: linear-gradient(#fff, #d6d5d6);
  color: #222;
`;

type Action = { kind: "link" | "off" | "head"; text: string; icon?: React.ReactNode };
const Act = ({ kind, text, icon }: Action) => (
  <ActionRow>
    <ActionIcon>{icon}</ActionIcon>
    {kind === "link" && <ActionLink href="#">{text}</ActionLink>}
    {kind === "off" && <ActionOff>{text}</ActionOff>}
    {kind === "head" && <ActionHead>{text}</ActionHead>}
  </ActionRow>
);

/* ---------- dialogs ---------- */

const Dialog = styled.section<{ $x: number; $y: number; $w: number; $h: number; $active?: boolean }>`
  position: absolute;
  left: ${(p) => p.$x}px;
  top: ${(p) => p.$y}px;
  width: ${(p) => p.$w}px;
  height: ${(p) => p.$h}px;
  display: flex;
  flex-direction: column;
  border: 1px solid ${(p) => (p.$active ? "#1883d7" : "#a8a8a8")};
  background: #f0f0f0;
`;

const DialogBar = styled.header<{ $active?: boolean }>`
  display: flex;
  align-items: center;
  height: 30px;
  padding: 0 17px 2px 8px;
  background: #fff;
  color: ${(p) => (p.$active ? "#000" : "#8f8f8f")};
`;

const DialogTitle = styled.h2`
  flex: 1;
  font-weight: 400;
`;

const HelpMark = styled.button`
  padding: 0;
  margin-right: 37px;
  border: 0;
  background: none;
  font-size: 14px;
`;

const CloseMark = styled(CaptionButton)`
  color: inherit;
`;

const BindingsBody = styled.div`
  display: flex;
  flex: 1;
  gap: 14px;
  padding: 14px 15px 14px 14px;
`;

const ListBox = styled.div`
  flex: 1;
  height: 278px;
  padding: 1px;
  border: 1px solid #828790;
  background: #fff;
`;

const BindingsTable = styled.table`
  table-layout: fixed;
  width: 418px;
  border-collapse: separate;
  border-spacing: 0;
  th, td {
    padding: 0 0 0 6px;
    text-align: left;
    font-weight: 400;
    white-space: nowrap;
  }
  th { height: 24px; padding-bottom: 1px; border-right: 1px solid #e5e5e5; }
  td { height: 19px; background: #f0f0f0; }
  td:first-child { background: linear-gradient(#f0f0f0, #f0f0f0) 4px 0 no-repeat; }
`;

const BindingButtons = styled.div`
  display: flex;
  flex-direction: column;
  gap: 8px;
  width: 103px;
  padding-top: 1px;
`;

const PushButton = styled.button<{ $width?: number; $focus?: boolean }>`
  width: ${(p) => (p.$width ? `${p.$width}px` : "100%")};
  height: 25px;
  padding: 0 2px 0 0;
  border: ${(p) => (p.$focus ? "2px solid #0078d7" : "1px solid #adadad")};
  background: #e1e1e1;
  &:disabled {
    color: #9c9c9c;
    background: #ccc;
    border-color: #bfbfbf;
  }
`;

const BottomButton = styled.div`
  margin-top: auto;
`;

const EditBody = styled.form`
  display: flex;
  flex-direction: column;
  flex: 1;
  padding: 14px 15px 14px 14px;
`;

const FieldRow = styled.div`
  display: flex;
  align-items: flex-end;
  gap: 8px;
`;

const Field = styled.div<{ $width: number }>`
  position: relative;
  width: ${(p) => p.$width}px;
`;

const FieldLabel = styled.label<{ $flush?: boolean }>`
  display: block;
  padding: 0 0 3px ${(p) => (p.$flush ? 0 : 3)}px;
`;

const TextBox = styled.input`
  display: block;
  width: 100%;
  height: 23px;
  padding: 0 2px 2px;
  border: 1px solid #7a7a7a;
  background: #fff;
`;

const SelectWrap = styled.div<{ $off?: boolean }>`
  display: grid;
  grid-template-columns: 1fr 14px;
  align-items: center;
  color: ${(p) => (p.$off ? "#a0a0a0" : "#444")};
  > select { grid-area: 1 / 1 / 2 / 3; }
  > svg { grid-area: 1 / 2; z-index: 1; pointer-events: none; }
`;

const Select = styled.select<{ $open?: boolean }>`
  appearance: none;
  width: 100%;
  height: 23px;
  padding: 0 3px 1px;
  color: #000;
  border: 1px solid ${(p) => (p.$open ? "#005499" : "#7a7a7a")};
  background: ${(p) => (p.$open ? "#cce4f7" : "#fff")};
  border-radius: 0;
  &:disabled {
    color: #767676;
    background: #ccc;
    border-color: #bfbfbf;
    opacity: 1;
  }
`;

const Options = styled.ul`
  position: absolute;
  left: 0;
  right: 0;
  top: 100%;
  z-index: 2;
  border: 1px solid #0078d7;
  background: #fff;
`;

const Option = styled.li<{ $active?: boolean }>`
  height: 15px;
  padding-left: 2px;
  line-height: 15px;
  color: ${(p) => (p.$active ? "#fff" : "#000")};
  background: ${(p) => (p.$active ? "#0078d7" : "#fff")};
`;

const HostRow = styled.div`
  margin-top: 11px;
`;

const CheckRow = styled.label`
  display: flex;
  align-items: center;
  gap: 6px;
  margin-top: 8px;
`;

const CheckBox = styled.input`
  appearance: none;
  width: 13px;
  height: 13px;
  border: 1px solid #333;
  background: #fff;
`;

const CertRow = styled(FieldRow)`
  margin-top: 43px;
`;

const CertButtons = styled.div`
  display: flex;
  gap: 10px;
  margin-bottom: -3px;
`;

const Footer = styled.div`
  display: flex;
  justify-content: flex-end;
  gap: 10px;
  margin-top: auto;
`;

export default function App() {
  return (
    <>
      <GlobalStyle />
      <SharedDefs />
      <Window>
        <TitleBar>
          <AppIcon />
          <WindowTitle>Internet Information Services (IIS) Manager</WindowTitle>
          <CaptionButtons>
            <CaptionButton aria-label="Minimize">
              <svg width="11" height="11" viewBox="0 0 11 11"><path d="M0 5.5H11" stroke="currentColor" /></svg>
            </CaptionButton>
            <CaptionButton aria-label="Restore">
              <svg width="11" height="11" viewBox="0 0 11 11">
                <path d="M.5 2.5H8.5V10.5H.5ZM2.5 2.5V.5H10.5V8.5H8.5" fill="none" stroke="currentColor" />
              </svg>
            </CaptionButton>
            <CaptionButton aria-label="Close"><Cross /></CaptionButton>
          </CaptionButtons>
        </TitleBar>

        <NavBar>
          <NavPill>
            <svg width="54" height="28" viewBox="0 0 54 28" aria-hidden="true">
              <path d="M12 2C18 0 20 4 27 4S38 0 43 2C51 4 54 9 53 15C52 22 47 26 41 25C35 25 33 23 27 23S18 26 12 25C5 25 0 20 .5 13C1 7 6 3 12 2Z" fill="url(#pill)" />
              <path d="M1 11C3 5 8 2 13 2C18 1 20 4 27 4S38 1 43 2C48 3 51 6 52 9" fill="none" stroke="#9fb0c4" />
              <path d="M6.5 14H18M11 9.500L6.500 14L11 18.500" fill="none" stroke="#6c7682" strokeWidth="1.800" />
              <path d="M38 14H49.500M45 9.500L49.500 14L45 18.500" fill="none" stroke="#8b95a0" strokeWidth="1.800" />
            </svg>
          </NavPill>
          <AddressBar>
            <CrumbStart><GlobeIcon /></CrumbStart>
            <CrumbArrow />
            <Crumb>SRVSQLP2</Crumb>
            <CrumbArrow />
            <Crumb>Sites</Crumb>
            <CrumbArrow />
            <Crumb>mojamalica</Crumb>
            <CrumbArrow />
          </AddressBar>
          <NavTools>
            <ToolButton aria-label="Refresh"><RefreshIcon /></ToolButton>
            <ToolButton aria-label="Stop loading" disabled><StopLoadIcon /></ToolButton>
            <ToolButton aria-label="Home page" disabled><HomeIcon /></ToolButton>
            <NavDivider />
            <ToolButton aria-label="Help menu"><HelpIcon /><DownArrow /></ToolButton>
          </NavTools>
        </NavBar>

        <MenuBar>
          <MenuButton>File</MenuButton>
          <MenuButton>View</MenuButton>
          <MenuButton>Help</MenuButton>
        </MenuBar>

        <Columns>
          <Connections>
            <PanelHeading>Connections</PanelHeading>
            <ConnectionTools>
              <ToolButton aria-label="Connect"><ConnectIcon /><DownArrow /></ToolButton>
              <ToolSpacer />
              <ToolButton aria-label="Save" disabled><SaveIcon /></ToolButton>
              <Separator $gap={5} />
              <ToolButton aria-label="Up"><UpFolderIcon /></ToolButton>
              <Separator $gap={6} />
              <ToolButton aria-label="Delete connection"><ConnectIcon blocked /></ToolButton>
            </ConnectionTools>
            <ul>
              {tree.map((row) => (
                <TreeRow key={row.label}>
                  <Gutter width={row.width} line={row.line} toggle={row.toggle} toggleColor={row.toggleColor} />
                  <TreeLabel $selected={row.selected}>
                    {row.icon}
                    {row.label}
                  </TreeLabel>
                </TreeRow>
              ))}
            </ul>
          </Connections>

          <Home>
            <HomeHeader>
              <svg width="31" height="32" viewBox="0 0 31 32" aria-hidden="true">
                <ellipse cx="17" cy="29" rx="11" ry="2.6" fill="#8b8f96" opacity="0.5" />
                <Globe x={15} y={15} s={1.42} />
              </svg>
              <HomeTitle>mojamalica Home</HomeTitle>
            </HomeHeader>
            <HomeBody>
              <FilterBar>
                <FilterLabel htmlFor="filter">Filter:</FilterLabel>
                <FilterInput id="filter" />
                <DropButton aria-label="Filter history"><DownArrow /></DropButton>
                <BarButton disabled><FunnelIcon />Go</BarButton>
                <BarButton disabled aria-label="Go options"><DropSpace><DownArrow color="#8a8a8a" /></DropSpace></BarButton>
                <BarButton><ShowAllIcon />Show All</BarButton>
                <Separator $gap={8} />
                <FilterLabel htmlFor="groupby">Group by:</FilterLabel>
                <GroupSelect id="groupby" defaultValue="Area"><option>Area</option></GroupSelect>
                <DropButton aria-label="Group options" tabIndex={-1}><DownArrow /></DropButton>
                <BarButton aria-label="View mode"><GridViewIcon /><DownArrow /></BarButton>
              </FilterBar>
              {groups.map((g) => (
                <section key={g.title}>
                  <GroupHeader>
                    <GroupTitle>{g.title}</GroupTitle>
                    <Rule />
                    <Collapse aria-label={`Collapse ${g.title}`}>
                      <svg width="8" height="6" viewBox="0 0 8 6">
                        <path d="M.8 4.8L4 1.6L7.2 4.8" fill="none" stroke="currentColor" strokeWidth="2" />
                      </svg>
                    </Collapse>
                  </GroupHeader>
                  <Features>
                    {g.items.map((f) => (
                      <Feature key={f.name} $column={f.column}>
                        <FeatureArt name={f.art} />
                        <FeatureName>{f.name}</FeatureName>
                      </Feature>
                    ))}
                  </Features>
                </section>
              ))}
            </HomeBody>
          </Home>

          <Actions>
            <PanelHeading>Actions</PanelHeading>
            <ActionList>
              <Act kind="link" text="Explore" icon={<ExploreIcon />} />
              <Act kind="link" text="Edit Permissions..." />
              <ActionRule />
              <Act kind="head" text="Edit Site" />
              <Act kind="link" text="Bindings..." />
              <Act kind="link" text="Basic Settings..." icon={<SettingsIcon />} />
              <ActionRule />
              <Act kind="link" text="View Applications" />
              <Act kind="link" text="View Virtual Directories" />
              <ActionRule />
              <ActionBand>
                <ActionHead>Manage Website</ActionHead>
                <RoundButton aria-label="Collapse Manage Website">
                  <svg width="8" height="6" viewBox="0 0 8 6">
                    <path d="M1 4.5L4 1.5L7 4.5" fill="none" stroke="currentColor" strokeWidth="1.8" />
                  </svg>
                </RoundButton>
              </ActionBand>
              <Act kind="off" text="Restart" icon={<RestartIcon />} />
              <Act kind="link" text="Start" icon={<StartIcon />} />
              <Act kind="off" text="Stop" icon={<StopIcon />} />
              <ActionRule />
              <Act kind="head" text="Browse Website" />
              <Act kind="link" text="Browse *:443 (https)" icon={<BrowseIcon />} />
              <ActionRule />
              <Act kind="link" text="Advanced Settings..." />
              <ActionRule />
              <Act kind="head" text="Configure" />
              <Act kind="link" text="Failed Request Tracing..." />
              <Act kind="link" text="Limits..." />
              <ActionRule />
              <Act kind="link" text="Help" icon={<HelpIcon />} />
            </ActionList>
          </Actions>
        </Columns>
      </Window>

      <Dialog $x={478} $y={237} $w={644} $h={378} role="dialog" aria-label="Site Bindings">
        <DialogBar>
          <DialogTitle>Site Bindings</DialogTitle>
          <HelpMark>?</HelpMark>
          <CloseMark aria-label="Close Site Bindings"><Cross /></CloseMark>
        </DialogBar>
        <BindingsBody>
          <ListBox>
            <BindingsTable>
              <colgroup>
                <col width="50" />
                <col width="110" />
                <col width="50" />
                <col width="100" />
                <col width="108" />
              </colgroup>
              <thead>
                <tr>
                  <th>Type</th>
                  <th>Host Name</th>
                  <th>Port</th>
                  <th>IP Address</th>
                  <th>Binding Informa...</th>
                </tr>
              </thead>
              <tbody>
                <tr>
                  <td>https</td>
                  <td />
                  <td>443</td>
                  <td>*</td>
                  <td />
                </tr>
              </tbody>
            </BindingsTable>
          </ListBox>
          <BindingButtons>
            <PushButton>Add...</PushButton>
            <PushButton $focus>Edit...</PushButton>
            <PushButton disabled>Remove</PushButton>
            <PushButton aria-label="Browse" />
            <BottomButton><PushButton aria-label="Close" /></BottomButton>
          </BindingButtons>
        </BindingsBody>
      </Dialog>

      <Dialog $x={570} $y={360} $w={527} $h={315} $active role="dialog" aria-label="Edit Site Binding">
        <DialogBar $active>
          <DialogTitle>Edit Site Binding</DialogTitle>
          <HelpMark>?</HelpMark>
          <CloseMark aria-label="Close Edit Site Binding"><Cross /></CloseMark>
        </DialogBar>
        <EditBody>
          <FieldRow>
            <Field $width={116}>
              <FieldLabel htmlFor="type">Type:</FieldLabel>
              <SelectWrap $off>
                <Select id="type" disabled defaultValue="https"><option>https</option></Select>
                <Caret />
              </SelectWrap>
            </Field>
            <Field $width={212}>
              <FieldLabel htmlFor="ip" $flush>IP address:</FieldLabel>
              <SelectWrap>
                <Select id="ip" defaultValue="All Unassigned"><option>All Unassigned</option></Select>
                <Caret />
              </SelectWrap>
            </Field>
            <Field $width={58}>
              <FieldLabel htmlFor="port" $flush>Port:</FieldLabel>
              <TextBox id="port" defaultValue="443" />
            </Field>
          </FieldRow>
          <HostRow>
            <Field $width={302}>
              <FieldLabel htmlFor="host">Host name:</FieldLabel>
              <TextBox id="host" />
            </Field>
          </HostRow>
          <CheckRow>
            <CheckBox type="checkbox" />
            Require Server Name Indication
          </CheckRow>
          <CertRow>
            <Field $width={297}>
              <FieldLabel htmlFor="cert">SSL certificate:</FieldLabel>
              <SelectWrap>
                <Select id="cert" $open defaultValue="staricertifikat"><option>staricertifikat</option></Select>
                <Caret />
              </SelectWrap>
              <Options role="listbox" aria-label="SSL certificates">
                <Option role="option">Not selected</Option>
                <Option role="option" $active aria-selected="true">novicertifikat</Option>
                <Option role="option">staricertifikat</Option>
              </Options>
            </Field>
            <CertButtons>
              <PushButton type="button" $width={86}>Select...</PushButton>
              <PushButton type="button" $width={86}>View...</PushButton>
            </CertButtons>
          </CertRow>
          <Footer>
            <PushButton type="button" $width={91} disabled>OK</PushButton>
            <PushButton type="button" $width={97}>Cancel</PushButton>
          </Footer>
        </EditBody>
      </Dialog>
    </>
  );
}
